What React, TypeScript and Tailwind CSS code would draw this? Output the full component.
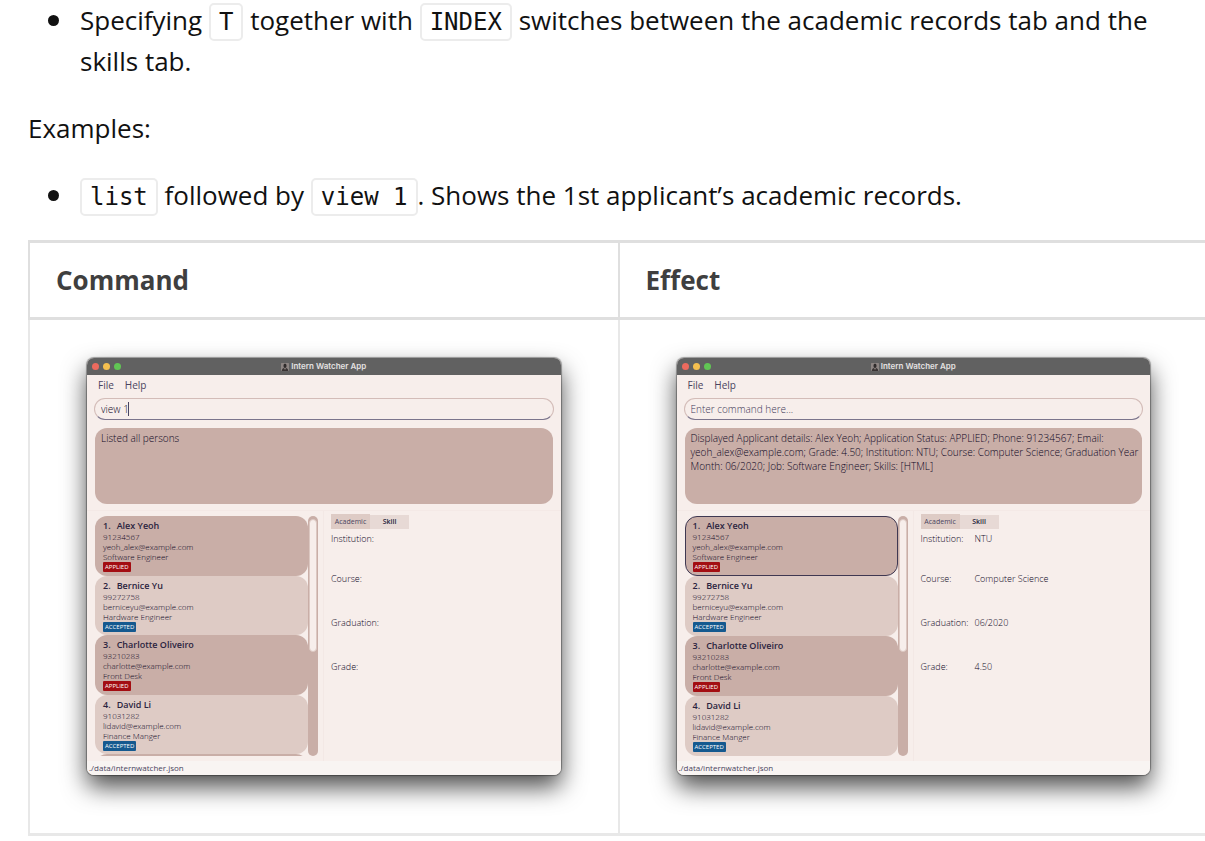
import type { ReactNode } from "react";

type Status = "APPLIED" | "ACCEPTED";

interface Applicant {
  name: string;
  phone: string;
  email: string;
  job: string;
  status: Status;
}

interface Details {
  institution: string;
  course: string;
  graduation: string;
  grade: string;
}

const applicants: Applicant[] = [
  { name: "Alex Yeoh", phone: "91234567", email: "yeoh_alex@example.com", job: "Software Engineer", status: "APPLIED" },
  { name: "Bernice Yu", phone: "99272758", email: "berniceyu@example.com", job: "Hardware Engineer", status: "ACCEPTED" },
  { name: "Charlotte Oliveiro", phone: "93210283", email: "charlotte@example.com", job: "Front Desk", status: "APPLIED" },
  { name: "David Li", phone: "91031282", email: "lidavid@example.com", job: "Finance Manger", status: "ACCEPTED" },
];

function Code({ children }: { children: ReactNode }) {
  return (
    <code className="rounded-[5px] border-2 border-[#ececec] px-2 py-[3px] font-['DejaVu_Sans_Mono',monospace] text-[24px] leading-none">
      {children}
    </code>
  );
}

function Bullet({ children }: { children: ReactNode }) {
  return (
    <li className="flex gap-5 pl-5">
      <span className="flex h-[41px] w-3 shrink-0 items-center">
        <span className="size-[11px] rounded-full bg-[#111]" />
      </span>
      <span>{children}</span>
    </li>
  );
}

function AppIcon() {
  return (
    <svg viewBox="0 0 16 16" className="size-2" aria-hidden="true">
      <rect width="16" height="16" rx="1" fill="#8d8583" />
      <path d="M5 5.5C5 2.8 6.2 1.5 8 1.5s3 1.300 3 4S9.800 10 8 10 5 8.200 5 5.500Z" fill="#2f2b2b" />
      <path d="M1.500 16c0-3.800 2-5.500 4.500-6h4c2.500.500 4.500 2.200 4.500 6Z" fill="#3a3535" />
      <path d="M6.800 10h2.400L8 14Z" fill="#c9b9b4" />
    </svg>
  );
}

function ApplicantCard({ index, applicant, selected }: { index: number; applicant: Applicant; selected: boolean }) {
  const shade = index % 2 === 0 ? "bg-[#c9aea7]" : "bg-[#decbc5]";
  const outline = selected ? "border-[#3f3852]" : "border-transparent";
  const badge = applicant.status === "APPLIED" ? "bg-[#a30d12]" : "bg-[#15598f]";
  return (
    <li className={`flex min-h-0 flex-col items-start rounded-xl border pt-[2px] pl-[7px] text-[8px] leading-[10px] font-light text-[#0f0826] ${shade} ${outline}`}>
      <h3 className="flex gap-[6px] text-[9px] leading-[13px] font-semibold text-[#2b2440]">
        <span>{index + 1}.</span>
        <span>{applicant.name}</span>
      </h3>
      <p>{applicant.phone}</p>
      <p>{applicant.email}</p>
      <p>{applicant.job}</p>
      <span className={`rounded-[1px] px-[2px] text-[6px] leading-[10px] font-medium text-white ${badge}`}>{applicant.status}</span>
    </li>
  );
}

interface AppWindowProps {
  id: string;
  command: string;
  result: string;
  selectedIndex: number;
  details?: Details;
}

function AppWindow({ id, command, result, selectedIndex, details }: AppWindowProps) {
  const hasSelection = selectedIndex >= 0;
  const rows: [string, string | undefined, string][] = [
    ["Institution:", details?.institution, "h-10"],
    ["Course:", details?.course, "h-11"],
    ["Graduation:", details?.graduation, "h-11"],
    ["Grade:", details?.grade, "h-11"],
  ];
  return (
    <section
      aria-label="Intern Watcher App"
      className="overflow-hidden rounded-[7px] bg-[#f7eeeb] font-['Open_Sans',sans-serif] text-[10px] font-light text-[#0f0826] shadow-[0_12px_24px_rgba(0,0,0,0.7),0_0_1px_1px_rgba(0,0,0,0.35)]"
    >
      <header className="grid h-[17px] grid-cols-[1fr_auto_1fr] items-center bg-[#616161] px-[5px]">
        <div className="flex gap-[4px]">
          <span className="size-[7px] rounded-full bg-[#ed6a5e]" />
          <span className="size-[7px] rounded-full bg-[#f5bf4f]" />
          <span className="size-[7px] rounded-full bg-[#61c554]" />
        </div>
        <div className="flex items-center gap-[2px]">
          <AppIcon />
          <h2 className="font-['Inter',sans-serif] text-[8px] leading-[17px] font-semibold text-[#e4e2e2]">Intern Watcher App</h2>
        </div>
      </header>

      <nav className="flex h-5 items-center gap-[11px] px-[11px] leading-5 font-normal text-[#4a4460]">
        <button type="button">File</button>
        <button type="button">Help</button>
      </nav>

      <div className="px-[7px] pt-[3px]">
        <div className="relative">
          <input
            id={id}
            aria-label="Command"
            defaultValue={command}
            placeholder="Enter command here..."
            className="block h-[22px] w-full rounded-full border border-[#d3bcb8] border-b-[#7b748c] bg-transparent px-[6px] text-[10px] text-[#0f0826] outline-none placeholder:text-[#3f3958]"
          />
          {command !== "" && <span className="absolute top-1 left-[34px] h-[14px] w-px bg-[#4a4460]" />}
        </div>
      </div>

      <output htmlFor={id} className="mx-2 mt-2 block h-[76px] rounded-xl bg-[#c9aea7] pt-[3px] pr-px pl-[6px] leading-[14px]">
        {result}
      </output>

      <div className="mt-[6px] grid h-[251px] grid-cols-[237px_1fr] border-t border-[#f4e9e6]">
        <div className="flex border-r border-[#f3e8e5] pt-[5px] pb-[5px] pl-2">
          <ol
            className={`grid h-[240px] w-[213px] overflow-hidden ${
              hasSelection ? "grid-rows-[repeat(4,1fr)]" : "grid-rows-[repeat(4,1fr)_2px]"
            }`}
          >
            {applicants.map((applicant, index) => (
              <ApplicantCard key={applicant.name} index={index} applicant={applicant} selected={index === selectedIndex} />
            ))}
            {!hasSelection && <li className="h-[60px] rounded-xl bg-[#c9aea7]" />}
          </ol>
          <div className="h-[240px] w-[10px] rounded-full bg-[#c9aea7] px-[1px] pt-[3px]">
            <div className="h-[133px] rounded-full border border-[#dcc8c2] bg-[#f7eeeb]" />
          </div>
        </div>

        <div className="pt-[3px] pl-[7px]">
          <div role="tablist" className="flex items-end text-[7px] leading-[14px]">
            <button type="button" role="tab" aria-selected="true" className="h-[15px] w-[39px] bg-[#decbc5] font-medium text-[#4a4460]">
              Academic
            </button>
            <button type="button" role="tab" aria-selected="false" className="h-[14px] w-[39px] bg-[#e7d9d5] font-semibold text-[#231c3a]">
              Skill
            </button>
          </div>
          <dl className="pt-[2px] text-[9px] leading-4">
            {rows.map(([label, value, height]) => (
              <div key={label} className={`flex ${height}`}>
                <dt className="w-[54px]">{label}</dt>
                <dd>{value}</dd>
              </div>
            ))}
          </dl>
        </div>
      </div>

      <footer className="h-[14px] bg-[#f8f4f2] px-[2px] text-[8px] leading-[14px] font-normal text-[#4a4460]">./data/internwatcher.json</footer>
    </section>
  );
}

export default function App() {
  return (
    <main className="overflow-hidden bg-white pb-[6px] pl-7 font-['Open_Sans',sans-serif] text-[26px] leading-[41px] text-[#111]">
      <ul className="pr-7">
        <Bullet>
          Specifying <Code>T</Code> together with <Code>INDEX</Code> switches between the academic records tab and the skills tab.
        </Bullet>
      </ul>
      <p className="my-[26px]">Examples:</p>
      <ul className="pr-7">
        <Bullet>
          <Code>list</Code> followed by <Code>view 1</Code>. Shows the 1st applicant’s academic records.
        </Bullet>
      </ul>

      <table className="mt-6 w-[calc(100%+4px)] table-fixed border-collapse border-2 border-[#e8e8e8]">
        <thead>
          <tr className="border-y-3 border-[#dfdfdf] text-left text-[#3f3f3f]">
            <th scope="col" className="border-x-2 border-[#dfdfdf] px-[26px] pt-[17px] pb-4 font-bold">
              Command
            </th>
            <th scope="col" className="border-x-2 border-[#dfdfdf] px-[26px] pt-[17px] pb-4 font-bold">
              Effect
            </th>
          </tr>
        </thead>
        <tbody>
          <tr className="border-b-3 border-[#e8e8e8]">
            <td className="border-x-2 border-[#e8e8e8] px-[57px] pt-[38px] pb-[58px]">
              <AppWindow id="command-before" command="view 1" result="Listed all persons" selectedIndex={-1} />
            </td>
            <td className="border-x-2 border-[#e8e8e8] px-[57px] pt-[38px] pb-[58px]">
              <AppWindow
                id="command-after"
                command=""
                result="Displayed Applicant details: Alex Yeoh; Application Status: APPLIED; Phone: 91234567; Email: yeoh_alex@example.com; Grade: 4.50; Institution: NTU; Course: Computer Science; Graduation Year Month: 06/2020; Job: Software Engineer; Skills: [HTML]"
                selectedIndex={0}
                details={{ institution: "NTU", course: "Computer Science", graduation: "06/2020", grade: "4.50" }}
              />
            </td>
          </tr>
        </tbody>
      </table>
    </main>
  );
}
